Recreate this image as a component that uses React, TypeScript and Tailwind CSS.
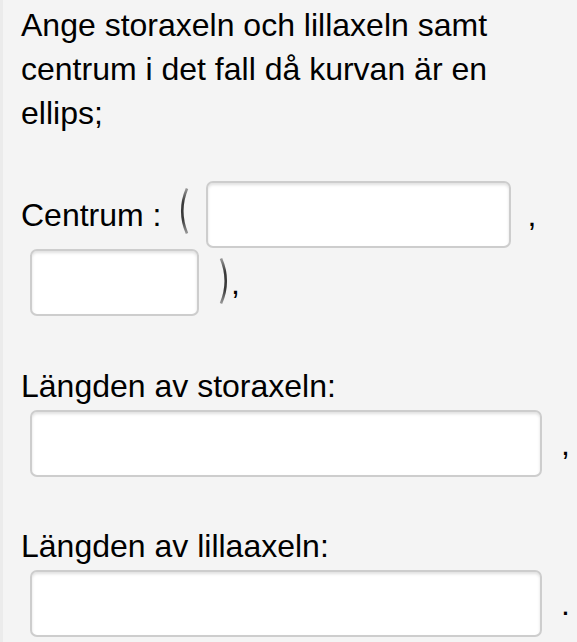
function Box({ className = "" }: { className?: string }) {
  return (
    <div
      className={`h-[67px] shrink-0 rounded-[7px] border-2 border-[#cdcdcd] bg-white shadow-[inset_0_2px_3px_rgba(0,0,0,0.12)] ${className}`}
    />
  );
}

function Paren({ right = false, className = "" }: { right?: boolean; className?: string }) {
  const id = right ? "pr" : "pl";
  return (
    <svg
      width="12"
      height="48"
      viewBox="0 0 12 48"
      className={`shrink-0 self-start ${className}`}
      style={right ? { transform: "scaleX(-1)" } : undefined}
    >
      <defs>
        <linearGradient id={id} x1="0" x2="0" y1="0" y2="1">
          <stop offset="0" stopColor="#9a9a9a" />
          <stop offset="0.3" stopColor="#3a3a3a" />
          <stop offset="0.7" stopColor="#3a3a3a" />
          <stop offset="1" stopColor="#9a9a9a" />
        </linearGradient>
      </defs>
      <path d="M10 1.5 Q0.5 24 10 46.5" fill="none" stroke={`url(#${id})`} strokeWidth="2.6" />
    </svg>
  );
}

export default function App() {
  return (
    <div className="min-h-screen w-[577px] overflow-hidden border-l-[3px] border-[#ebebeb] bg-[#f4f4f4] pl-[18px] font-['Liberation_Sans',Arial,sans-serif] text-[32px] leading-[44px] text-black">
      <p className="w-[530px] pt-[3px]">
        Ange storaxeln och lillaxeln samt centrum i det fall då kurvan är en ellips;
      </p>

      {/* Centrum */}
      <div className="mt-[46px] flex h-[67px] items-center">
        <span>Centrum :</span>
        <Paren className="ml-[16px] mt-[6px]" />
        <Box className="ml-[17px] w-[305px]" />
        <span className="ml-[16px]">,</span>
      </div>
      <div className="mt-[1px] flex h-[67px] items-center">
        <Box className="ml-[9px] w-[169px]" />
        <Paren right className="ml-[20px] mt-[8px]" />
        <span className="leading-[30px]">,</span>
      </div>

      {/* Storaxeln */}
      <div className="mt-[48px]">Längden av storaxeln:</div>
      <div className="mt-[2px] flex h-[67px] items-center">
        <Box className="ml-[9px] w-[512px]" />
        <span className="ml-[19px]">,</span>
      </div>

      {/* Lillaaxeln */}
      <div className="mt-[47px]">Längden av lillaaxeln:</div>
      <div className="mt-[2px] flex h-[67px] items-center">
        <Box className="ml-[9px] w-[512px]" />
        <span className="ml-[19px]">.</span>
      </div>
    </div>
  );
}
